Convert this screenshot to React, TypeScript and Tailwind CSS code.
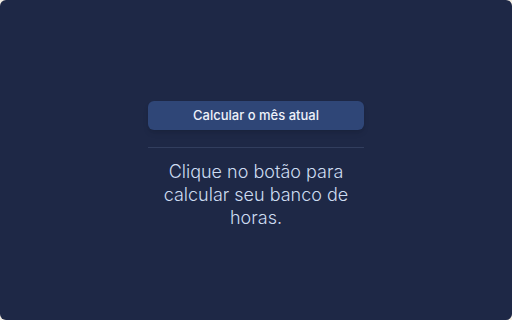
import React from "react";

export default function App() {
  return (
    <div className="h-[320px] w-[512px] bg-[#f3eee4]" style={{ fontFamily: "Inter, 'Noto Sans', sans-serif" }}>
      <div className="flex h-full w-full flex-col items-center justify-center rounded-[6px] bg-[#1e2846]">
        <div className="flex w-[216px] flex-col items-center pt-[10px]">
          <button className="h-[29px] w-full rounded-md bg-[#2f4677] text-[13px] font-medium text-[#eef2fb] shadow-md">
            Calcular o mês atual
          </button>
          <div className="mt-[17px] h-px w-full bg-[#323e5e]" />
          <p className="mt-[12px] text-center text-[18px] font-light leading-[23px] text-[#cddcf1]">
            Clique no botão para calcular seu banco de horas.
          </p>
        </div>
      </div>
    </div>
  );
}
